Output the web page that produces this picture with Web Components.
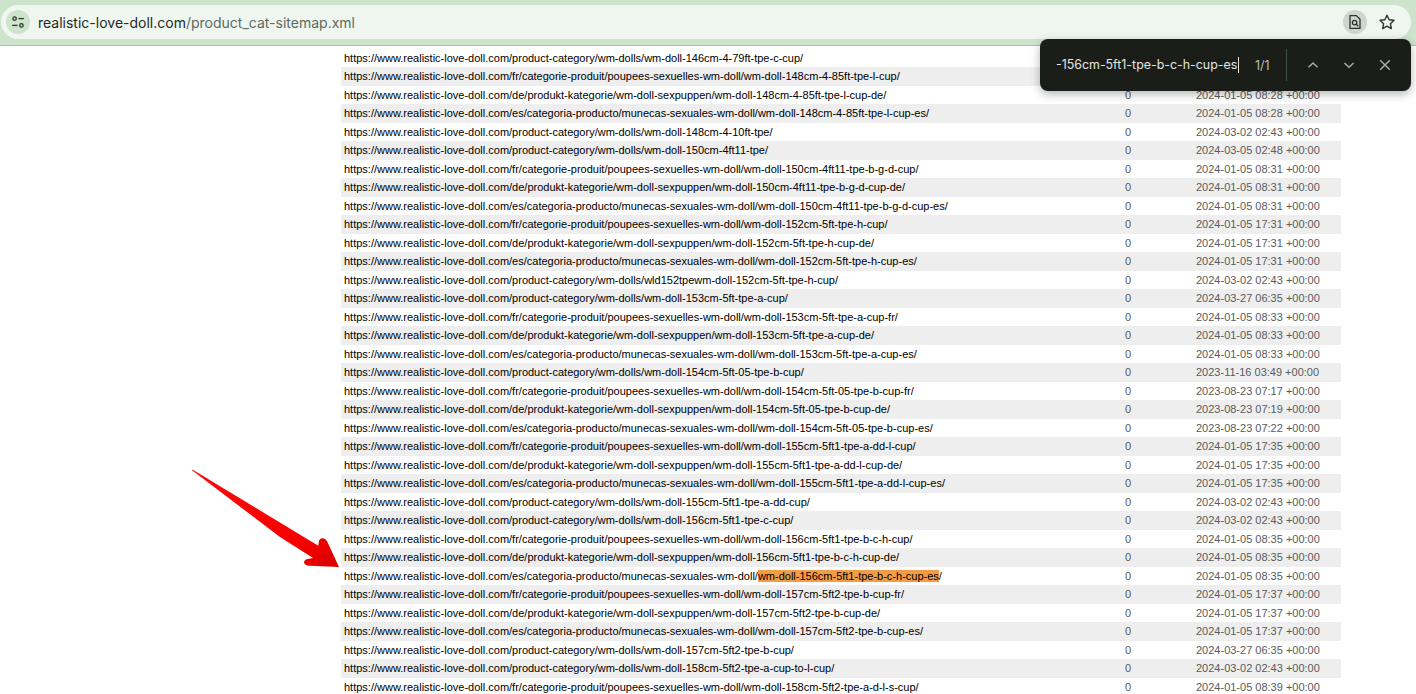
<!DOCTYPE html>
<html>
<head>
<meta charset="utf-8">
<title>product_cat-sitemap.xml</title>
<style>
  html, body { margin: 0; height: 100%; overflow: hidden; background: #fff; }
  body { font-family: "Liberation Sans", Arial, sans-serif; }
</style>
</head>
<body>
<browser-page></browser-page>
<script>
const ROOT = 'https://www.realistic-love-doll.com/';
const FR = 'fr/categorie-produit/poupees-sexuelles-wm-doll/';
const DE = 'de/produkt-kategorie/wm-doll-sexpuppen/';
const ES = 'es/categoria-producto/munecas-sexuales-wm-doll/';
const EN = 'product-category/wm-dolls/';

// the first two rows run under the find bar, their last columns can't be seen
const ROWS = [
  [EN + 'wm-doll-146cm-4-79ft-tpe-c-cup/'],
  [FR + 'wm-doll-148cm-4-85ft-tpe-l-cup/'],
  [DE + 'wm-doll-148cm-4-85ft-tpe-l-cup-de/', '2024-01-05 08:28'],
  [ES + 'wm-doll-148cm-4-85ft-tpe-l-cup-es/', '2024-01-05 08:28'],
  [EN + 'wm-doll-148cm-4-10ft-tpe/', '2024-03-02 02:43'],
  [EN + 'wm-doll-150cm-4ft11-tpe/', '2024-03-05 02:48'],
  [FR + 'wm-doll-150cm-4ft11-tpe-b-g-d-cup/', '2024-01-05 08:31'],
  [DE + 'wm-doll-150cm-4ft11-tpe-b-g-d-cup-de/', '2024-01-05 08:31'],
  [ES + 'wm-doll-150cm-4ft11-tpe-b-g-d-cup-es/', '2024-01-05 08:31'],
  [FR + 'wm-doll-152cm-5ft-tpe-h-cup/', '2024-01-05 17:31'],
  [DE + 'wm-doll-152cm-5ft-tpe-h-cup-de/', '2024-01-05 17:31'],
  [ES + 'wm-doll-152cm-5ft-tpe-h-cup-es/', '2024-01-05 17:31'],
  [EN + 'wld152tpewm-doll-152cm-5ft-tpe-h-cup/', '2024-03-02 02:43'],
  [EN + 'wm-doll-153cm-5ft-tpe-a-cup/', '2024-03-27 06:35'],
  [FR + 'wm-doll-153cm-5ft-tpe-a-cup-fr/', '2024-01-05 08:33'],
  [DE + 'wm-doll-153cm-5ft-tpe-a-cup-de/', '2024-01-05 08:33'],
  [ES + 'wm-doll-153cm-5ft-tpe-a-cup-es/', '2024-01-05 08:33'],
  [EN + 'wm-doll-154cm-5ft-05-tpe-b-cup/', '2023-11-16 03:49'],
  [FR + 'wm-doll-154cm-5ft-05-tpe-b-cup-fr/', '2023-08-23 07:17'],
  [DE + 'wm-doll-154cm-5ft-05-tpe-b-cup-de/', '2023-08-23 07:19'],
  [ES + 'wm-doll-154cm-5ft-05-tpe-b-cup-es/', '2023-08-23 07:22'],
  [FR + 'wm-doll-155cm-5ft1-tpe-a-dd-l-cup/', '2024-01-05 17:35'],
  [DE + 'wm-doll-155cm-5ft1-tpe-a-dd-l-cup-de/', '2024-01-05 17:35'],
  [ES + 'wm-doll-155cm-5ft1-tpe-a-dd-l-cup-es/', '2024-01-05 17:35'],
  [EN + 'wm-doll-155cm-5ft1-tpe-a-dd-cup/', '2024-03-02 02:43'],
  [EN + 'wm-doll-156cm-5ft1-tpe-c-cup/', '2024-03-02 02:43'],
  [FR + 'wm-doll-156cm-5ft1-tpe-b-c-h-cup/', '2024-01-05 08:35'],
  [DE + 'wm-doll-156cm-5ft1-tpe-b-c-h-cup-de/', '2024-01-05 08:35'],
  [ES + 'wm-doll-156cm-5ft1-tpe-b-c-h-cup-es/', '2024-01-05 08:35'],
  [FR + 'wm-doll-157cm-5ft2-tpe-b-cup-fr/', '2024-01-05 17:37'],
  [DE + 'wm-doll-157cm-5ft2-tpe-b-cup-de/', '2024-01-05 17:37'],
  [ES + 'wm-doll-157cm-5ft2-tpe-b-cup-es/', '2024-01-05 17:37'],
  [EN + 'wm-doll-157cm-5ft2-tpe-b-cup/', '2024-03-27 06:35'],
  [EN + 'wm-doll-158cm-5ft2-tpe-a-cup-to-l-cup/', '2024-03-02 02:43'],
  [FR + 'wm-doll-158cm-5ft2-tpe-a-d-l-s-cup/', '2024-01-05 08:39'],
];
const MATCH = 'wm-doll-156cm-5ft1-tpe-b-c-h-cup-es';

class BrowserBar extends HTMLElement {
  constructor() {
    super();
    this.attachShadow({ mode: 'open' });
    this.shadowRoot.innerHTML = `
      <style>
        :host { display: block; height: 46px; box-sizing: border-box; background: #cde3cc; border-bottom: 1px solid #a9c4a9; padding: 5px 5px 6px 1px; }
        .pill { height: 34px; border-radius: 17px; background: #eff6f0; display: flex; align-items: center; padding: 0 12px 0 5px; }
        .tune { width: 24px; height: 24px; border-radius: 50%; background: #cde3cc; display: flex; align-items: center; justify-content: center; flex: none; }
        .url { margin-left: 8px; flex: 1; font: 14px Inter, "Liberation Sans", sans-serif; color: #1f2a22; white-space: nowrap; opacity: .999; }
        .url span { color: #5d6a60; }
        .lens { width: 24px; height: 24px; border-radius: 50%; background: #ced5cf; display: flex; align-items: center; justify-content: center; flex: none; }
        .star { margin-left: 11px; margin-right: 3px; display: flex; flex: none; }
      </style>
      <div class="pill">
        <span class="tune">
          <svg width="14" height="14" viewBox="0 0 14 14" fill="none" stroke="#27352b" stroke-width="1.3">
            <circle cx="3.6" cy="3.6" r="1.7"/><path d="M7.5 3.6h5.3"/>
            <circle cx="10.4" cy="10.4" r="1.7"/><path d="M1.2 10.4h5.3"/>
          </svg>
        </span>
        <span class="url">realistic-love-doll.com<span>/product_cat-sitemap.xml</span></span>
        <span class="lens">
          <svg width="16" height="16" viewBox="0 0 16 16" fill="none" stroke="#27352b" stroke-width="1.3">
            <path d="M3 1.6h6.4l3.6 3.6v9.2H3z" stroke-linejoin="round"/>
            <circle cx="7.6" cy="8.6" r="2.2"/><path d="M9.3 10.3l2 2"/>
          </svg>
        </span>
        <span class="star">
          <svg width="18" height="18" viewBox="0 0 18 18" fill="none" stroke="#27352b" stroke-width="1.4" stroke-linejoin="round">
            <path d="M9 2.2l2.1 4.5 4.9.6-3.6 3.4.9 4.9L9 13.2l-4.3 2.4.9-4.9L2 7.3l4.9-.6z"/>
          </svg>
        </span>
      </div>`;
  }
}

class FindBar extends HTMLElement {
  constructor() {
    super();
    this.attachShadow({ mode: 'open' });
    this.shadowRoot.innerHTML = `
      <style>
        :host { position: absolute; left: 1040px; top: 39px; width: 371px; height: 52px; box-sizing: border-box; background: #1b1d19; border-radius: 8px; box-shadow: 0 3px 10px rgba(0,0,0,.3); display: flex; align-items: center; padding-left: 16px; color: #e4e6e2; font: 12.4px Inter, "Liberation Sans", sans-serif; }
        .q { white-space: nowrap; border-right: 1px solid #e4e6e2; line-height: 16px; width: 182px; opacity: .999; }
        .n { margin-left: 16px; width: 31px; color: #b9bdb6; opacity: .999; }
        .sep { width: 1px; height: 32px; background: #3d4f3e; margin-right: 8px; }
        .b { width: 36px; height: 36px; display: flex; align-items: center; justify-content: center; flex: none; }
        svg { fill: none; stroke: #a9aca7; stroke-width: 1.5; }
      </style>
      <span class="q"><slot></slot></span>
      <span class="n">1/1</span>
      <span class="sep"></span>
      <span class="b"><svg width="14" height="14" viewBox="0 0 14 14"><path d="M2.5 9.2L7 5l4.5 4.2"/></svg></span>
      <span class="b"><svg width="14" height="14" viewBox="0 0 14 14"><path d="M2.5 5L7 9.2 11.500 5"/></svg></span>
      <span class="b"><svg width="14" height="14" viewBox="0 0 14 14"><path d="M2.200 2.200l9.600 9.600M11.800 2.200l-9.600 9.600"/></svg></span>`;
  }
}

class SitemapRow extends HTMLElement {
  constructor() {
    super();
    this.attachShadow({ mode: 'open' });
  }
  connectedCallback() {
    const date = this.getAttribute('date');
    this.shadowRoot.innerHTML = `
      <style>
        :host { display: grid; grid-template-columns: 781px 71px 1fr; padding-left: 3px; height: 18.5px; line-height: 18.5px; font-size: 11px; color: #000; white-space: nowrap; }
        :host(:nth-child(even)) { background: #eee; }
        .c { color: #5a5a5a; }
        ::slotted(mark) { background: #f39c46; color: #000; }
      </style>
      <div><slot></slot></div>
      ${date ? `<div class="c">0</div><div class="c">${date} +00:00</div>` : ''}`;
  }
}

class SitemapTable extends HTMLElement {
  constructor() {
    super();
    this.attachShadow({ mode: 'open' });
    // opacity just under 1 gives grey text smoothing, like the reference
    this.shadowRoot.innerHTML = `
      <style>:host { display: block; width: 1000px; margin: 2.75px 0 0 341px; opacity: .999; }</style>
      <slot></slot>`;
  }
  connectedCallback() {
    for (const [path, date] of ROWS) {
      const row = document.createElement('sitemap-row');
      if (date) row.setAttribute('date', date);
      if (path.includes(MATCH)) {
        const at = path.indexOf(MATCH);
        row.append(ROOT + path.slice(0, at));
        const mark = document.createElement('mark');
        mark.textContent = MATCH;
        row.append(mark, path.slice(at + MATCH.length));
      } else {
        row.textContent = ROOT + path;
      }
      this.append(row);
    }
  }
}

class RedArrow extends HTMLElement {
  constructor() {
    super();
    this.attachShadow({ mode: 'open' });
    this.shadowRoot.innerHTML = `
      <style>:host { position: absolute; left: 185px; top: 465px; width: 160px; height: 108px; display: block; }</style>
      <svg width="160" height="108" viewBox="185 465 160 108">
        <defs>
          <linearGradient id="r" x1="0" y1="0" x2="1" y2="1">
            <stop offset="0" stop-color="#f80c0c"/><stop offset="0.75" stop-color="#f60000"/><stop offset="1" stop-color="#d80000"/>
          </linearGradient>
        </defs>
        <path fill="url(#r)" d="M191.700 470L192.800 469.800L318.300 545.700L319 540.500Q320.500 537.600 323.500 538.300Q326 539 327.200 541.500L339 567L309.500 565.800Q304.500 565.500 304 562.500Q304 560 307.500 559L313 558L280 537Z"/>
      </svg>`;
  }
}

class BrowserPage extends HTMLElement {
  constructor() {
    super();
    this.attachShadow({ mode: 'open' });
    this.shadowRoot.innerHTML = `
      <style>:host { display: block; position: relative; width: 1416px; height: 694px; overflow: hidden; background: #fff; }</style>
      <browser-bar></browser-bar>
      <sitemap-table></sitemap-table>
      <red-arrow></red-arrow>
      <find-bar>-156cm-5ft1-tpe-b-c-h-cup-es</find-bar>`;
  }
}

customElements.define('browser-bar', BrowserBar);
customElements.define('find-bar', FindBar);
customElements.define('sitemap-row', SitemapRow);
customElements.define('sitemap-table', SitemapTable);
customElements.define('red-arrow', RedArrow);
customElements.define('browser-page', BrowserPage);
</script>
</body>
</html>
